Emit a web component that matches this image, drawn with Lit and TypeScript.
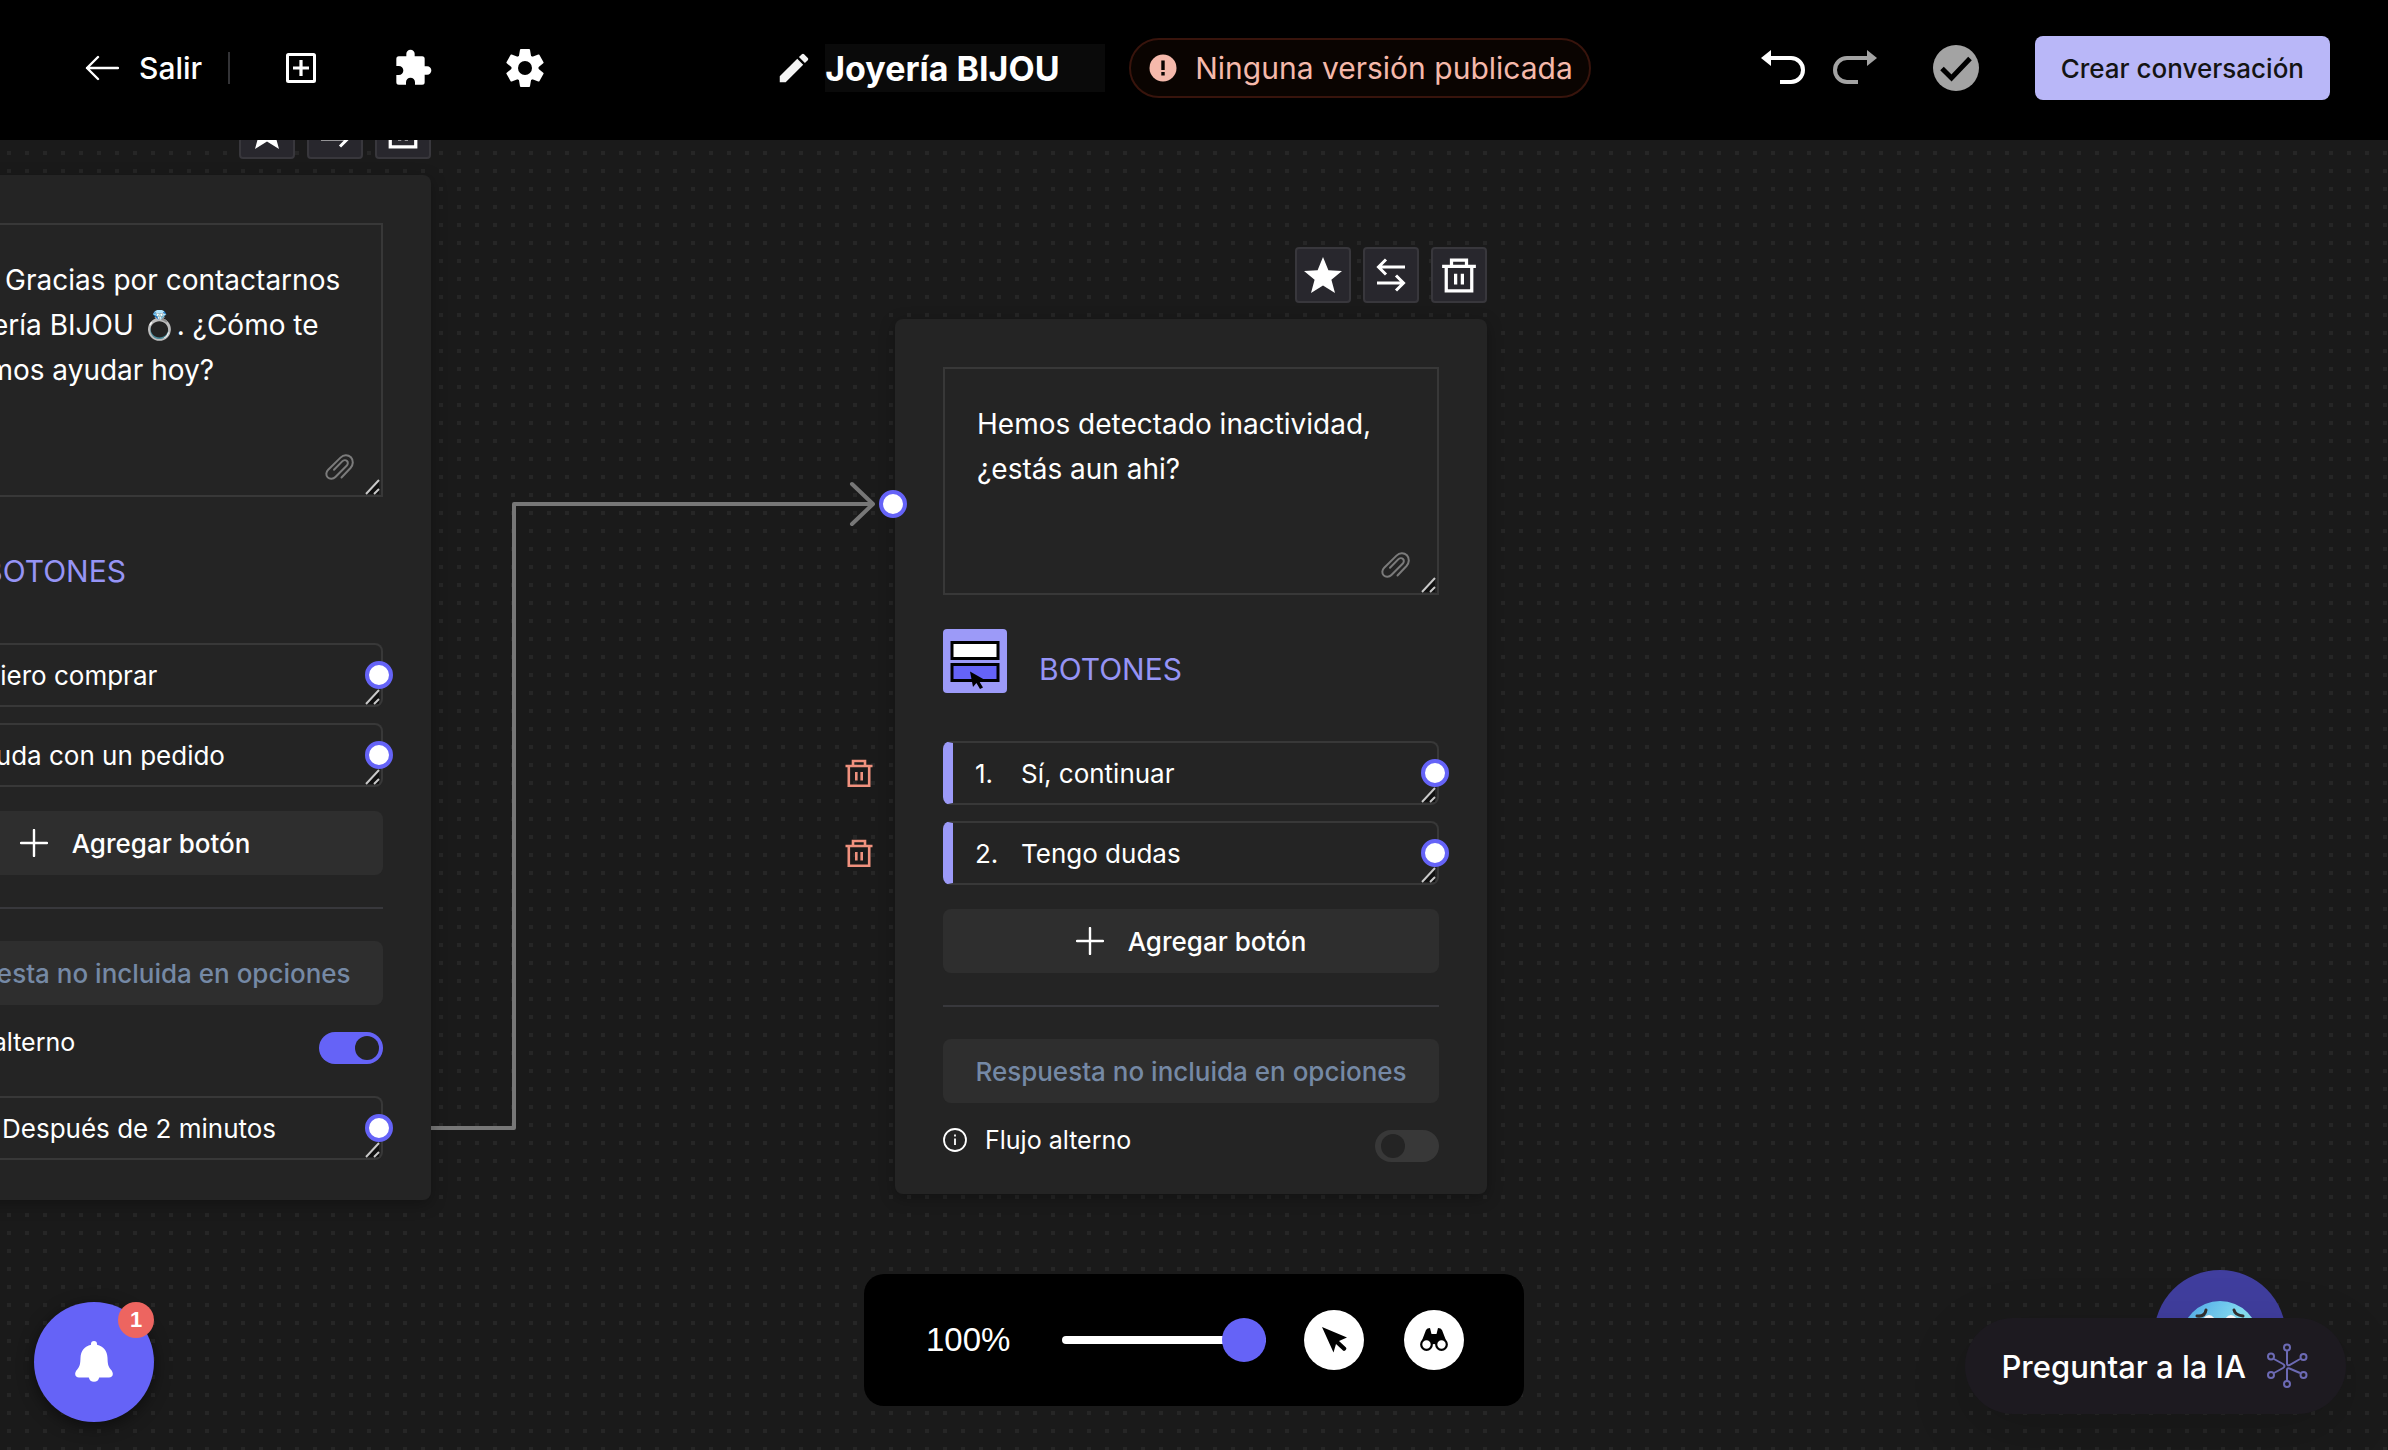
import { LitElement, html, css, svg } from "lit";
import { customElement, property } from "lit/decorators.js";

const trash = svg`<path d="M2.500 9h27M10 8.500V4h12v4.500M5.800 9.500v19.200h20.400V9.500M13.300 15v8.500M18.700 15v8.500" fill="none" stroke="currentColor" stroke-width="2.600"/>`;

const shared = css`
  * {
    box-sizing: border-box;
  }
  button,
  input,
  textarea {
    font: inherit;
    color: inherit;
    margin: 0;
    padding: 0;
    border: 0;
    background: none;
    outline: none;
  }
  button {
    cursor: pointer;
  }
  svg {
    display: block;
    flex: none;
  }
`;

interface OptionData {
  label: string;
}

@customElement("flow-option")
export class FlowOption extends LitElement {
  static styles = [
    shared,
    css`
      :host {
        display: block;
      }
      .row {
        position: relative;
        display: flex;
        align-items: center;
        height: 64px;
        border: 2px solid #383838;
        border-left: 10px solid #9c9af8;
        border-radius: 8px;
        padding-left: 22px;
        font-size: 26px;
      }
      .number {
        flex: none;
        width: 46px;
      }
      .timer {
        flex: none;
        width: 83px;
      }
      .text {
        flex: 1;
        min-width: 0;
        height: 60px;
      }
      .handle {
        position: absolute;
        right: -12px;
        top: 16px;
        width: 28px;
        height: 28px;
        border: 4px solid #6563f7;
        border-radius: 50%;
        background: #fff;
      }
      .grip {
        position: absolute;
        right: 0;
        bottom: 0;
      }
      .remove {
        position: absolute;
        left: -110px;
        top: 14px;
        color: #f0917e;
      }
    `,
  ];
  @property() label = "";
  @property({ type: Number }) index = 0;
  @property({ type: Boolean }) timer = false;

  render() {
    return html`<div class="row">
      ${this.timer
        ? html`<svg class="timer" width="83" height="28" viewBox="0 0 83 28" fill="none" stroke="#fff" stroke-width="2"><circle cx="14" cy="14" r="11" /><path d="M14 7v7l5 3" /></svg>`
        : html`<span class="number">${this.index}.</span>
            <button class="remove" aria-label="Eliminar botón">
              <svg width="32" height="32" viewBox="0 0 32 32">${trash}</svg>
            </button>`}
      <input class="text" aria-label="Texto de la opción" .value=${this.label} />
      <svg class="grip" width="16" height="16" viewBox="0 0 16 16"><path d="M0 15L14 0V15z" fill="#101010" /><path d="M1 15L14 1M9 15l5-5" stroke="#c8c8c8" stroke-width="2" /></svg>
      <span class="handle"></span>
    </div>`;
  }
}

@customElement("flow-node")
export class FlowNode extends LitElement {
  static styles = [
    shared,
    css`
      :host {
        display: flex;
        flex-direction: column;
        gap: 16px;
        width: 592px;
      }
      .tools {
        display: flex;
        justify-content: flex-end;
        gap: 12px;
      }
      .tool {
        display: grid;
        place-items: center;
        width: 56px;
        height: 56px;
        border: 2px solid #38373c;
        border-radius: 4px;
        background: #28272d;
        color: #fff;
      }
      .card {
        position: relative;
        display: flex;
        flex-direction: column;
        padding: 48px 48px 32px;
        border-radius: 8px;
        background: #242424;
        box-shadow: 0 4px 16px rgba(0, 0, 0, 0.3);
      }
      .timed {
        padding-bottom: 40px;
      }
      .message {
        position: relative;
        display: flex;
        margin-bottom: 34px;
      }
      .body {
        flex: 1;
        resize: none;
        overflow: hidden;
        white-space: pre;
        border: 2px solid #383838;
        padding: 33px 32px;
        font-size: 28px;
        line-height: 45px;
      }
      .clip {
        position: absolute;
        right: 28px;
        bottom: 14px;
      }
      .grip {
        position: absolute;
        right: 2px;
        bottom: 2px;
      }
      .title {
        display: flex;
        align-items: flex-end;
        gap: 32px;
        margin-bottom: 48px;
        font-size: 30px;
        line-height: 48px;
        color: #9694f5;
      }
      .options {
        display: flex;
        flex-direction: column;
        gap: 16px;
        margin-bottom: 24px;
      }
      .add,
      .other {
        display: flex;
        align-items: center;
        justify-content: center;
        height: 64px;
        border-radius: 8px;
        background: #2e2e2e;
        font-size: 26px;
        font-weight: 500;
      }
      .add {
        gap: 24px;
      }
      .rule {
        height: 2px;
        margin: 32px 0;
        background: #38383c;
      }
      .other {
        color: #7589a5;
      }
      .alternate {
        display: flex;
        align-items: flex-start;
        justify-content: space-between;
        margin-top: 27px;
        font-size: 25px;
        line-height: 20px;
      }
      .label {
        display: flex;
        align-items: center;
        gap: 18px;
        height: 20px;
      }
      .switch {
        appearance: none;
        width: 64px;
        height: 32px;
        padding: 4px 6px;
        border-radius: 16px;
        background: #383838;
      }
      .switch::before {
        content: "";
        display: block;
        width: 24px;
        height: 24px;
        border-radius: 50%;
        background: #242424;
      }
      .switch:checked {
        background: #6563f7;
      }
      .switch:checked::before {
        margin-left: 30px;
      }
      .wait {
        margin-top: 32px;
      }
      .input {
        position: absolute;
        left: -16px;
        top: 171px;
        width: 28px;
        height: 28px;
        border: 4px solid #6563f7;
        border-radius: 50%;
        background: #fff;
      }
    `,
  ];
  @property() message = "";
  @property({ type: Number }) bodyHeight = 228;
  @property({ attribute: false }) options: OptionData[] = [];
  @property() wait = "";

  render() {
    return html`
      <div class="tools">
        <button class="tool" aria-label="Favorito">
          <svg width="38" height="36" viewBox="0 0 38 36"><path d="M19 0l5.400 13.300L38 14l-10.600 8.800L31 36 19 28.500 7 36l3.600-13.200L0 14l13.600-.7z" fill="currentColor" /></svg>
        </button>
        <button class="tool" aria-label="Mover">
          <svg width="32" height="36" viewBox="0 0 32 36" fill="none" stroke="currentColor" stroke-width="3"><path d="M30 10H4M11 2.500L3.500 10l7.500 7.500M2 26h26M21 18.500l7.500 7.500-7.500 7.500" /></svg>
        </button>
        <button class="tool" aria-label="Eliminar">
          <svg width="40" height="40" viewBox="0 0 32 32">${trash}</svg>
        </button>
      </div>
      <article class="card ${this.wait ? "timed" : ""}">
        <div class="message">
          <textarea class="body" aria-label="Mensaje" spellcheck="false" style="height:${this.bodyHeight}px" .value=${this.message}></textarea>
          <svg class="clip" width="32" height="32" viewBox="0 0 32 32" fill="none" stroke="#7b7b7b" stroke-width="2" stroke-linecap="round"><path d="M18.500 26.500l9-9.500c2.800-3.100 3.200-7.700.4-10.700-3-2.900-7.400-2.600-10.400.3L5.200 18.700c-2.300 2.300-2.500 5.700-.5 7.700s5.400 1.900 7.700-.4L23.600 14.700c1.500-1.500 1.600-3.500.4-4.700s-3.300-1.100-4.800.4L11 18.700" /></svg>
          <svg class="grip" width="16" height="16" viewBox="0 0 16 16"><path d="M0 15L14 0V15z" fill="#101010" /><path d="M1 15L14 1M9 15l5-5" stroke="#c8c8c8" stroke-width="2" /></svg>
        </div>
        <div class="title">
          <svg width="64" height="64" viewBox="0 0 64 64"><rect width="64" height="64" rx="4" fill="#9c9af8" /><g stroke="#000" stroke-width="3"><rect x="9" y="13.500" width="46" height="16" fill="#fff" /><rect x="9" y="35.500" width="46" height="16" fill="#6563f7" /></g><path d="M27 42.500l15 8.500-5.600 1.400L40 58.500l-3 1.500-3.600-6-3.400 4z" fill="#000" /></svg>
          <span>BOTONES</span>
        </div>
        <div class="options">
          ${this.options.map((o, i) => html`<flow-option .index=${i + 1} .label=${o.label}></flow-option>`)}
        </div>
        <button class="add">
          <svg width="28" height="28" viewBox="0 0 28 28"><path d="M14 1v26M1 14h26" stroke="currentColor" stroke-width="2.400" stroke-linecap="round" /></svg>
          <span>Agregar botón</span>
        </button>
        <div class="rule"></div>
        <button class="other">Respuesta no incluida en opciones</button>
        <div class="alternate">
          <label class="label" for="alt">
            <svg width="24" height="24" viewBox="0 0 24 24" fill="none" stroke="#fff" stroke-width="1.800"><circle cx="12" cy="12" r="11" /><path d="M12 10.500V17M12 6.500v2" /></svg>
            <span>Flujo alterno</span>
          </label>
          <input id="alt" class="switch" type="checkbox" .checked=${!!this.wait} />
        </div>
        ${this.wait
          ? html`<flow-option class="wait" timer .label=${this.wait}></flow-option>`
          : html`<span class="input"></span>`}
      </article>
    `;
  }
}

@customElement("app-root")
export class AppRoot extends LitElement {
  static styles = [
    shared,
    css`
      :host {
        display: flex;
        flex-direction: column;
        min-height: 100vh;
        color: #fff;
        background: #1a1a1a;
        font-family: Inter, "Liberation Sans", sans-serif;
      }
      .header {
        position: relative;
        display: grid;
        grid-template-columns: 1fr auto 1fr;
        align-items: center;
        height: 140px;
        padding: 0 58px 4px 36px;
        background: #000;
      }
      .group {
        display: flex;
        align-items: center;
      }
      .exit {
        display: flex;
        align-items: center;
        gap: 20px;
        margin-left: 49px;
        padding-right: 26px;
        border-right: 2px solid #333336;
        height: 32px;
        font-size: 30px;
        font-weight: 500;
        color: #fff;
        text-decoration: none;
      }
      .menu {
        display: flex;
        gap: 72px;
        margin-left: 51px;
      }
      .name {
        width: 280px;
        height: 48px;
        margin: 0 24px 0 12px;
        background: #0a0a0a;
        font-size: 34px;
        font-weight: 700;
      }
      .status {
        display: flex;
        align-items: center;
        gap: 18px;
        height: 60px;
        padding: 0 16px 0 18px;
        border: 2px solid #38140c;
        border-radius: 30px;
        background: #0a0401;
        color: #f5b9ab;
        font-size: 30px;
      }
      .actions {
        justify-content: flex-end;
      }
      .undo {
        margin-right: 28px;
      }
      .redo {
        margin-right: 56px;
      }
      .create {
        height: 64px;
        margin-left: 56px;
        padding: 0 26px;
        border-radius: 8px;
        background: #b9b7f8;
        color: #141414;
        font-size: 26px;
        font-weight: 500;
        white-space: nowrap;
      }
      .canvas {
        position: relative;
        flex: 1;
        overflow: hidden;
        background: conic-gradient(from 270deg at 4px 4px, #262626 0 90deg, #1a1a1a 0) 7px 11px / 18px 18px;
      }
      .edge {
        position: absolute;
        left: 0;
        top: 0;
      }
      .welcome {
        position: absolute;
        left: -161px;
        top: -37px;
      }
      .idle {
        position: absolute;
        left: 895px;
        top: 107px;
      }
      .zoom {
        position: absolute;
        left: 50%;
        bottom: 44px;
        transform: translateX(-50%);
        display: flex;
        align-items: center;
        width: 660px;
        height: 132px;
        padding: 0 60px 0 62px;
        border-radius: 20px;
        background: #000;
        font-size: 33px;
      }
      .percent {
        width: 136px;
        font-family: "Liberation Sans", sans-serif;
      }
      .slider {
        appearance: none;
        width: 204px;
        height: 44px;
        margin-right: 38px;
      }
      .slider::-webkit-slider-runnable-track {
        height: 8px;
        border-radius: 4px;
        background: #fff;
      }
      .slider::-webkit-slider-thumb {
        appearance: none;
        width: 44px;
        height: 44px;
        margin-top: -18px;
        border-radius: 50%;
        background: #6563f7;
      }
      .round {
        display: grid;
        place-items: center;
        width: 60px;
        height: 60px;
        border-radius: 50%;
        background: #fff;
        color: #000;
      }
      .round + .round {
        margin-left: 40px;
      }
      .bell {
        position: absolute;
        left: 34px;
        bottom: 28px;
        display: grid;
        place-items: center;
        width: 120px;
        height: 120px;
        border-radius: 50%;
        background: #6563f7;
        box-shadow: 0 4px 16px rgba(0, 0, 0, 0.5);
      }
      .badge {
        position: absolute;
        right: 0;
        top: 0;
        width: 36px;
        border-radius: 50%;
        background: #ed6560;
        font: 700 22px/36px "Liberation Sans", sans-serif;
        text-align: center;
      }
      .avatar {
        position: absolute;
        right: 102px;
        bottom: 48px;
      }
      .ask {
        position: absolute;
        right: 42px;
        bottom: 36px;
        display: flex;
        align-items: center;
        gap: 20px;
        height: 96px;
        padding: 0 38px 0 36px;
        border-radius: 48px;
        background: #1d1a20;
        box-shadow: 0 16px 60px rgba(0, 0, 0, 0.15);
        font-size: 31px;
        font-weight: 500;
      }
    `,
  ];

  render() {
    return html`
      <header class="header">
        <nav class="group">
          <a class="exit" href="#">
            <svg width="34" height="26" viewBox="0 0 34 26" fill="none" stroke="#fff" stroke-width="2.400" stroke-linecap="round" stroke-linejoin="round"><path d="M33 13H2M13 2L2 13l11 11" /></svg>
            <span>Salir</span>
          </a>
          <div class="menu">
            <button aria-label="Agregar bloque">
              <svg width="40" height="40" viewBox="0 0 40 40" fill="none" stroke="#fff"><rect x="6.500" y="6.500" width="27" height="27" rx="1" stroke-width="3" /><path d="M20 12v16M12 20h16" stroke-width="3.200" /></svg>
            </button>
            <button aria-label="Integraciones">
              <svg width="40" height="40" viewBox="0 0 24 24" fill="#fff"><path d="M20.500 11H19V6.500A1.500 1.500 0 0 0 17.500 5H13V3.500a2.500 2.500 0 0 0-5 0V5H3.500A1.500 1.500 0 0 0 2 6.500v4.300h1.500a2.700 2.700 0 0 1 0 5.400H2v4.300A1.500 1.500 0 0 0 3.500 22h4.300v-1.500a2.700 2.700 0 0 1 5.400 0V22h4.300a1.500 1.500 0 0 0 1.500-1.500V16h1.500a2.500 2.500 0 0 0 0-5z" /></svg>
            </button>
            <button aria-label="Configuración">
              <svg width="40" height="40" viewBox="0 0 40 40" fill="#fff"><circle cx="20" cy="20" r="13.500" />${[0, 60, 120, 180, 240, 300].map((a) => svg`<path d="M15.800 1h8.400q.6 0 .8.800l1.400 8.200h-12.800l1.400-8.200q.2-.8.800-.8z" transform="rotate(${a} 20 20)" />`)}<circle cx="20" cy="20" r="7" fill="#000" /></svg>
            </button>
          </div>
        </nav>
        <div class="group">
          <svg width="38" height="38" viewBox="0 0 24 24" fill="#f4f4f4"><path d="M3 17.250V21h3.750L17.810 9.940l-3.750-3.750L3 17.250zM20.710 7.040a1 1 0 0 0 0-1.410l-2.340-2.340a1 1 0 0 0-1.410 0l-1.830 1.830 3.750 3.750 1.830-1.830z" /></svg>
          <input class="name" aria-label="Nombre" value="Joyería BIJOU" />
          <div class="status">
            <svg width="28" height="28" viewBox="0 0 28 28"><circle cx="14" cy="14" r="13.500" fill="#f5b9ab" /><path d="M12.300 6.500h3.400v9.500h-3.400zM12.300 18h3.400v3.500h-3.400z" fill="#0a0401" /></svg>
            <span>Ninguna versión publicada</span>
          </div>
        </div>
        <div class="group actions">
          <button class="undo" aria-label="Deshacer">
            <svg width="44" height="36" viewBox="0 0 44 36"><path d="M10 0v16L0 8z" fill="#fff" /><path d="M8 8h22a12 12 0 0 1 0 24H19" fill="none" stroke="#fff" stroke-width="4" /></svg>
          </button>
          <button class="redo" aria-label="Rehacer">
            <svg width="44" height="36" viewBox="0 0 44 36"><path d="M34 0v16l10-8z" fill="#a3a3a3" /><path d="M36 8H14a12 12 0 0 0 0 24h11" fill="none" stroke="#a3a3a3" stroke-width="4" /></svg>
          </button>
          <svg width="46" height="46" viewBox="0 0 46 46"><circle cx="23" cy="23" r="23" fill="#a3a3a3" /><path d="M9 23.500l9.500 9.500L37 13.500" fill="none" stroke="#000" stroke-width="5" /></svg>
          <button class="create">Crear conversación</button>
        </div>
      </header>
      <main class="canvas">
        <svg class="edge" width="900" height="1000" viewBox="0 0 900 1000" fill="none" stroke="#777" stroke-width="4" stroke-linejoin="round"><path d="M431 988H514V364H872" /><path d="M852 344l21 20-21 20" stroke-linecap="round" /></svg>
        <flow-node
          class="welcome"
          .bodyHeight=${274}
          .message=${"¡Hola! Gracias por contactarnos\na Joyería BIJOU 💍. ¿Cómo te\npodemos ayudar hoy?"}
          .options=${[{ label: "Quiero comprar" }, { label: "Ayuda con un pedido" }]}
          wait="Después de 2 minutos"
        ></flow-node>
        <flow-node
          class="idle"
          .message=${"Hemos detectado inactividad,\n¿estás aun ahi?"}
          .options=${[{ label: "Sí, continuar" }, { label: "Tengo dudas" }]}
        ></flow-node>
        <div class="zoom">
          <span class="percent">100%</span>
          <input class="slider" type="range" min="0" max="100" .value=${"100"} aria-label="Zoom" />
          <button class="round" aria-label="Seleccionar">
            <svg width="30" height="30" viewBox="0 0 30 30"><path d="M3 2l25 10.500-8 3.500 7 6.500q1 1-.3 2.500-1.700 1.500-2.700.5L17 19l-2.500 8.500z" fill="currentColor" /></svg>
          </button>
          <button class="round" aria-label="Buscar">
            <svg width="30" height="30" viewBox="0 0 30 30"><path d="M7 5q1-2 4-2l1.500 6h5L19 3q3 0 4 2l5 13H2z" fill="currentColor" /><g fill="#fff" stroke="currentColor" stroke-width="2.200"><path d="M12 18h6" /><circle cx="7.500" cy="19.500" r="5.300" /><circle cx="22.500" cy="19.500" r="5.300" /></g></svg>
          </button>
        </div>
        <button class="bell" aria-label="Notificaciones">
          <svg width="40" height="44" viewBox="0 0 40 44" fill="#fff"><path d="M20 1a3 3 0 0 1 3 3v.8c6.500 1.500 10.200 6.300 10.500 13 .2 6 .5 8.700 3.500 12 3.500 4 1.500 7.700-2 7.700H25.200a5.300 5.300 0 0 1-10.400 0H5c-3.500 0-5.500-3.700-2-7.700 3-3.300 3.300-6 3.500-12C6.800 11.100 10.500 6.300 17 4.800V4a3 3 0 0 1 3-3z" /></svg>
          <span class="badge">1</span>
        </button>
        <button class="avatar" aria-label="Asistente">
          <svg width="132" height="132" viewBox="0 0 132 132">
            <defs><linearGradient id="face" x1="0" y1="0" x2="1" y2="1"><stop offset="0" stop-color="#4ba5ec" /><stop offset=".45" stop-color="#85e0f6" /><stop offset="1" stop-color="#a0f5e0" /></linearGradient></defs>
            <circle cx="66" cy="66" r="66" fill="#403e9e" />
            <circle cx="66" cy="70" r="39" fill="url(#face)" />
            <g fill="#fff"><ellipse cx="55" cy="54" rx="7" ry="9" /><ellipse cx="77" cy="54" rx="7" ry="9" /></g>
            <path d="M43 46q8 1 9-6M89 46q-8-1-9-6" fill="none" stroke="#33302f" stroke-width="3" stroke-linecap="round" />
          </svg>
        </button>
        <button class="ask">
          <span>Preguntar a la IA</span>
          <svg width="42" height="46" viewBox="0 0 42 46" fill="none" stroke="#6c6ab4" stroke-width="2"><path d="M21 8v12.500q0 2.500 2.500 1.500L34 16M21 38V27q0-2.500 2.500-1.500L34 30M8 16l9 5q3 2 0 4l-9 5" /><circle cx="21" cy="4.500" r="3" /><circle cx="21" cy="41" r="3" /><circle cx="5" cy="13.500" r="3" /><circle cx="5" cy="32" r="3" /><circle cx="37.500" cy="14" r="3" /><circle cx="37.500" cy="32" r="3" /></svg>
        </button>
      </main>
    `;
  }
}
